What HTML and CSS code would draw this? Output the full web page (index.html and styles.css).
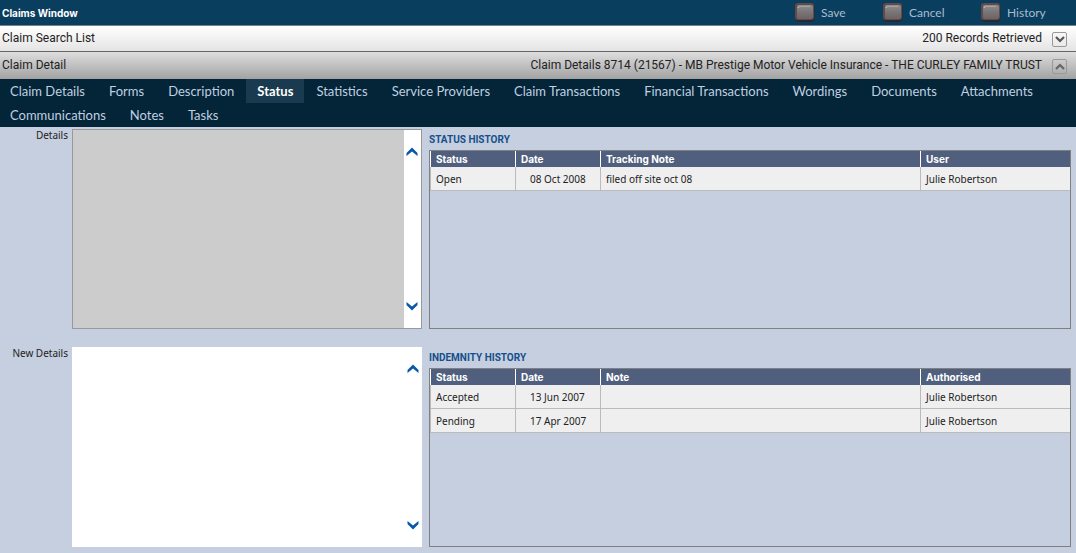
FILE: index.html
```html
<!DOCTYPE html>
<html lang="en">
<head>
<meta charset="utf-8">
<title>Claims Window</title>
<link rel="stylesheet" href="styles.css">
</head>
<body>
<svg class="defs" aria-hidden="true">
  <defs>
    <linearGradient id="face" x1="0" y1="0" x2="0" y2="1">
      <stop offset="0" stop-color="#8f8d8f"/><stop offset=".5" stop-color="#7a7577"/><stop offset="1" stop-color="#6a6466"/>
    </linearGradient>
    <symbol id="key" viewBox="0 0 20 19">
      <rect x=".5" y="1" width="19" height="18" rx="4" fill="#2c2831"/>
      <rect x="0" y="0" width="19" height="17" rx="3" fill="#634a48"/>
      <rect x="2" y="2" width="16" height="14" rx="2" fill="url(#face)"/>
      <path d="M4 3.500h11" stroke="#a3a2a5"/>
      <path d="M3 5l1-1.500" stroke="#c4c1c1"/>
    </symbol>
    <symbol id="up" viewBox="0 0 12 10"><path d="M.5 9V6L6 .5 11.500 6v3L6 4.500z" fill="#0958a8"/></symbol>
    <symbol id="down" viewBox="0 0 12 10"><path d="M.5 1v3L6 9.500 11.500 4V1L6 5.500z" fill="#0958a8"/></symbol>
  </defs>
</svg>
<header class="titlebar">
  <h1 class="title">Claims Window</h1>
  <div class="actions">
    <button class="action" type="button"><svg class="key"><use href="#key"/></svg>Save</button>
    <button class="action action-wide" type="button"><svg class="key"><use href="#key"/></svg>Cancel</button>
    <button class="action" type="button"><svg class="key"><use href="#key"/></svg>History</button>
  </div>
</header>
<section class="bar bar-list">
  <h2 class="bar-title">Claim Search List</h2>
  <span class="bar-info">200 Records Retrieved</span>
  <button class="toggle" type="button" aria-label="Expand"><svg class="toggle-icon" viewBox="0 0 10 7"><path d="M1 1l4 4 4-4" fill="none" stroke="#555" stroke-width="2.200"/></svg></button>
</section>
<section class="bar bar-detail">
  <h2 class="bar-title">Claim Detail</h2>
  <span class="bar-info">Claim Details 8714 (21567) - MB Prestige Motor Vehicle Insurance - THE CURLEY FAMILY TRUST</span>
  <button class="toggle" type="button" aria-label="Collapse"><svg class="toggle-icon" viewBox="0 0 10 7"><path d="M1 6l4-4 4 4" fill="none" stroke="#666" stroke-width="2.200"/></svg></button>
</section>
<nav class="tabs">
  <a class="tab tab-start" href="#">Claim Details</a>
  <a class="tab" href="#">Forms</a>
  <a class="tab" href="#">Description</a>
  <a class="tab tab-active" href="#">Status</a>
  <a class="tab" href="#">Statistics</a>
  <a class="tab" href="#">Service Providers</a>
  <a class="tab" href="#">Claim Transactions</a>
  <a class="tab" href="#">Financial Transactions</a>
  <a class="tab" href="#">Wordings</a>
  <a class="tab" href="#">Documents</a>
  <a class="tab" href="#">Attachments</a>
  <a class="tab tab-start" href="#">Communications</a>
  <a class="tab" href="#">Notes</a>
  <a class="tab" href="#">Tasks</a>
</nav>
<main class="content">
  <div class="row">
    <label class="label" for="details">Details</label>
    <div class="box box-readonly">
      <textarea class="text" id="details" readonly></textarea>
      <div class="scroll">
        <button class="arrow" type="button" aria-label="Scroll up"><svg class="chev"><use href="#up"/></svg></button>
        <button class="arrow" type="button" aria-label="Scroll down"><svg class="chev"><use href="#down"/></svg></button>
      </div>
    </div>
    <section class="history">
      <h3 class="heading">STATUS HISTORY</h3>
      <div class="panel">
        <table class="grid">
          <colgroup><col class="c-narrow"><col class="c-narrow"><col><col class="c-user"></colgroup>
          <thead><tr><th>Status</th><th>Date</th><th>Tracking Note</th><th>User</th></tr></thead>
          <tbody><tr><td>Open</td><td class="date">08 Oct 2008</td><td>filed off site oct 08</td><td>Julie Robertson</td></tr></tbody>
        </table>
      </div>
    </section>
  </div>
  <div class="row">
    <label class="label" for="newdetails">New Details</label>
    <div class="box">
      <textarea class="text" id="newdetails"></textarea>
      <div class="scroll">
        <button class="arrow" type="button" aria-label="Scroll up"><svg class="chev"><use href="#up"/></svg></button>
        <button class="arrow" type="button" aria-label="Scroll down"><svg class="chev"><use href="#down"/></svg></button>
      </div>
    </div>
    <section class="history">
      <h3 class="heading">INDEMNITY HISTORY</h3>
      <div class="panel">
        <table class="grid">
          <colgroup><col class="c-narrow"><col class="c-narrow"><col><col class="c-user"></colgroup>
          <thead><tr><th>Status</th><th>Date</th><th>Note</th><th>Authorised</th></tr></thead>
          <tbody>
            <tr><td>Accepted</td><td class="date">13 Jun 2007</td><td></td><td>Julie Robertson</td></tr>
            <tr><td>Pending</td><td class="date">17 Apr 2007</td><td></td><td>Julie Robertson</td></tr>
          </tbody>
        </table>
      </div>
    </section>
  </div>
</main>
</body>
</html>
```
FILE: styles.css
```css
* { box-sizing: border-box; }
body { margin: 0; background: #c6cfdf; color: #222; font: 10px/12px "Noto Sans", sans-serif; }
h1, h2, h3 { margin: 0; }
button { border: 0; padding: 0; background: none; font: inherit; color: inherit; }
.defs { position: absolute; width: 0; height: 0; }

.titlebar { display: flex; align-items: center; justify-content: space-between; min-height: 26px; padding: 0 19px 0 2px; background: #093e5f; border-bottom: 1px solid #75858f; }
.title { font: bold 10px/14px "Inter", sans-serif; color: #fff; }
.actions { display: flex; }
.action { display: flex; align-items: center; gap: 6px; min-width: 88px; font: 12px/16px "Lato", sans-serif; color: #a9bccd; }
.action-wide { min-width: 98px; }
.action:last-child { min-width: 76px; }
.key { width: 20px; height: 19px; }

.bar { display: flex; align-items: center; padding: 0 9px 2px 2px; min-height: 26px; font: 12px/18px "Roboto", sans-serif; }
.bar-list { background: linear-gradient(#fff, #e4e4e4); border-bottom: 1px solid #666; }
.bar-detail { min-height: 27px; background: linear-gradient(#dedede, #a2a2a2); }
.bar-title { flex: 1; font: inherit; }
.bar-info { margin-right: 10px; }
.toggle { display: flex; align-items: center; justify-content: center; width: 15px; height: 15px; margin-top: 4px; border: 1px solid #999; border-radius: 2px; }
.toggle-icon { width: 10px; height: 7px; }

.tabs { display: flex; flex-wrap: wrap; background: #042437; }
.tab { padding: 0 12px; font: 13px/24px "Lato", sans-serif; color: #bfd0e0; text-decoration: none; }
.tab-start { padding-left: 10px; }
.tab-active { padding: 0 11px; font-weight: bold; color: #fff; background: #1a3a50; }

.content { display: flex; flex-direction: column; gap: 18px; padding: 2px 5px 6px 0; }
.row { display: grid; grid-template-columns: 68px 350px 1fr; column-gap: 4px; min-height: 200px; }
.label { text-align: right; }
.box { display: flex; background: #fff; }
.box-readonly { border: 1px solid #999; }
.text { flex: 1; min-width: 0; border: 0; resize: none; background: transparent; font: inherit; }
.box-readonly .text { background: #ccc; }
.scroll { display: flex; flex-direction: column; justify-content: space-between; width: 17px; padding: 17px 3px 17px 2px; }
.arrow, .chev { display: block; width: 12px; height: 10px; }

.history { display: flex; flex-direction: column; margin-left: 3px; }
.heading { padding: 5px 0 4px; font: bold 10px/12px "Roboto", sans-serif; color: #15508c; }
.panel { flex: 1; border: 1px solid #808080; }
.grid { width: 100%; table-layout: fixed; border-collapse: separate; border-spacing: 0; }
.c-narrow { width: 85px; }
.c-user { width: 150px; }
.grid th { height: 16px; padding: 0 5px; text-align: left; font: bold 10px/16px "Inter", sans-serif; color: #fff; background: #505f7d; border-left: 1px solid #fff; }
.grid td { height: 24px; padding: 0 5px; background: #efefef; border-left: 1px solid #bbb; border-bottom: 1px solid #bbb; }
.grid .date { padding-left: 14px; }
```
